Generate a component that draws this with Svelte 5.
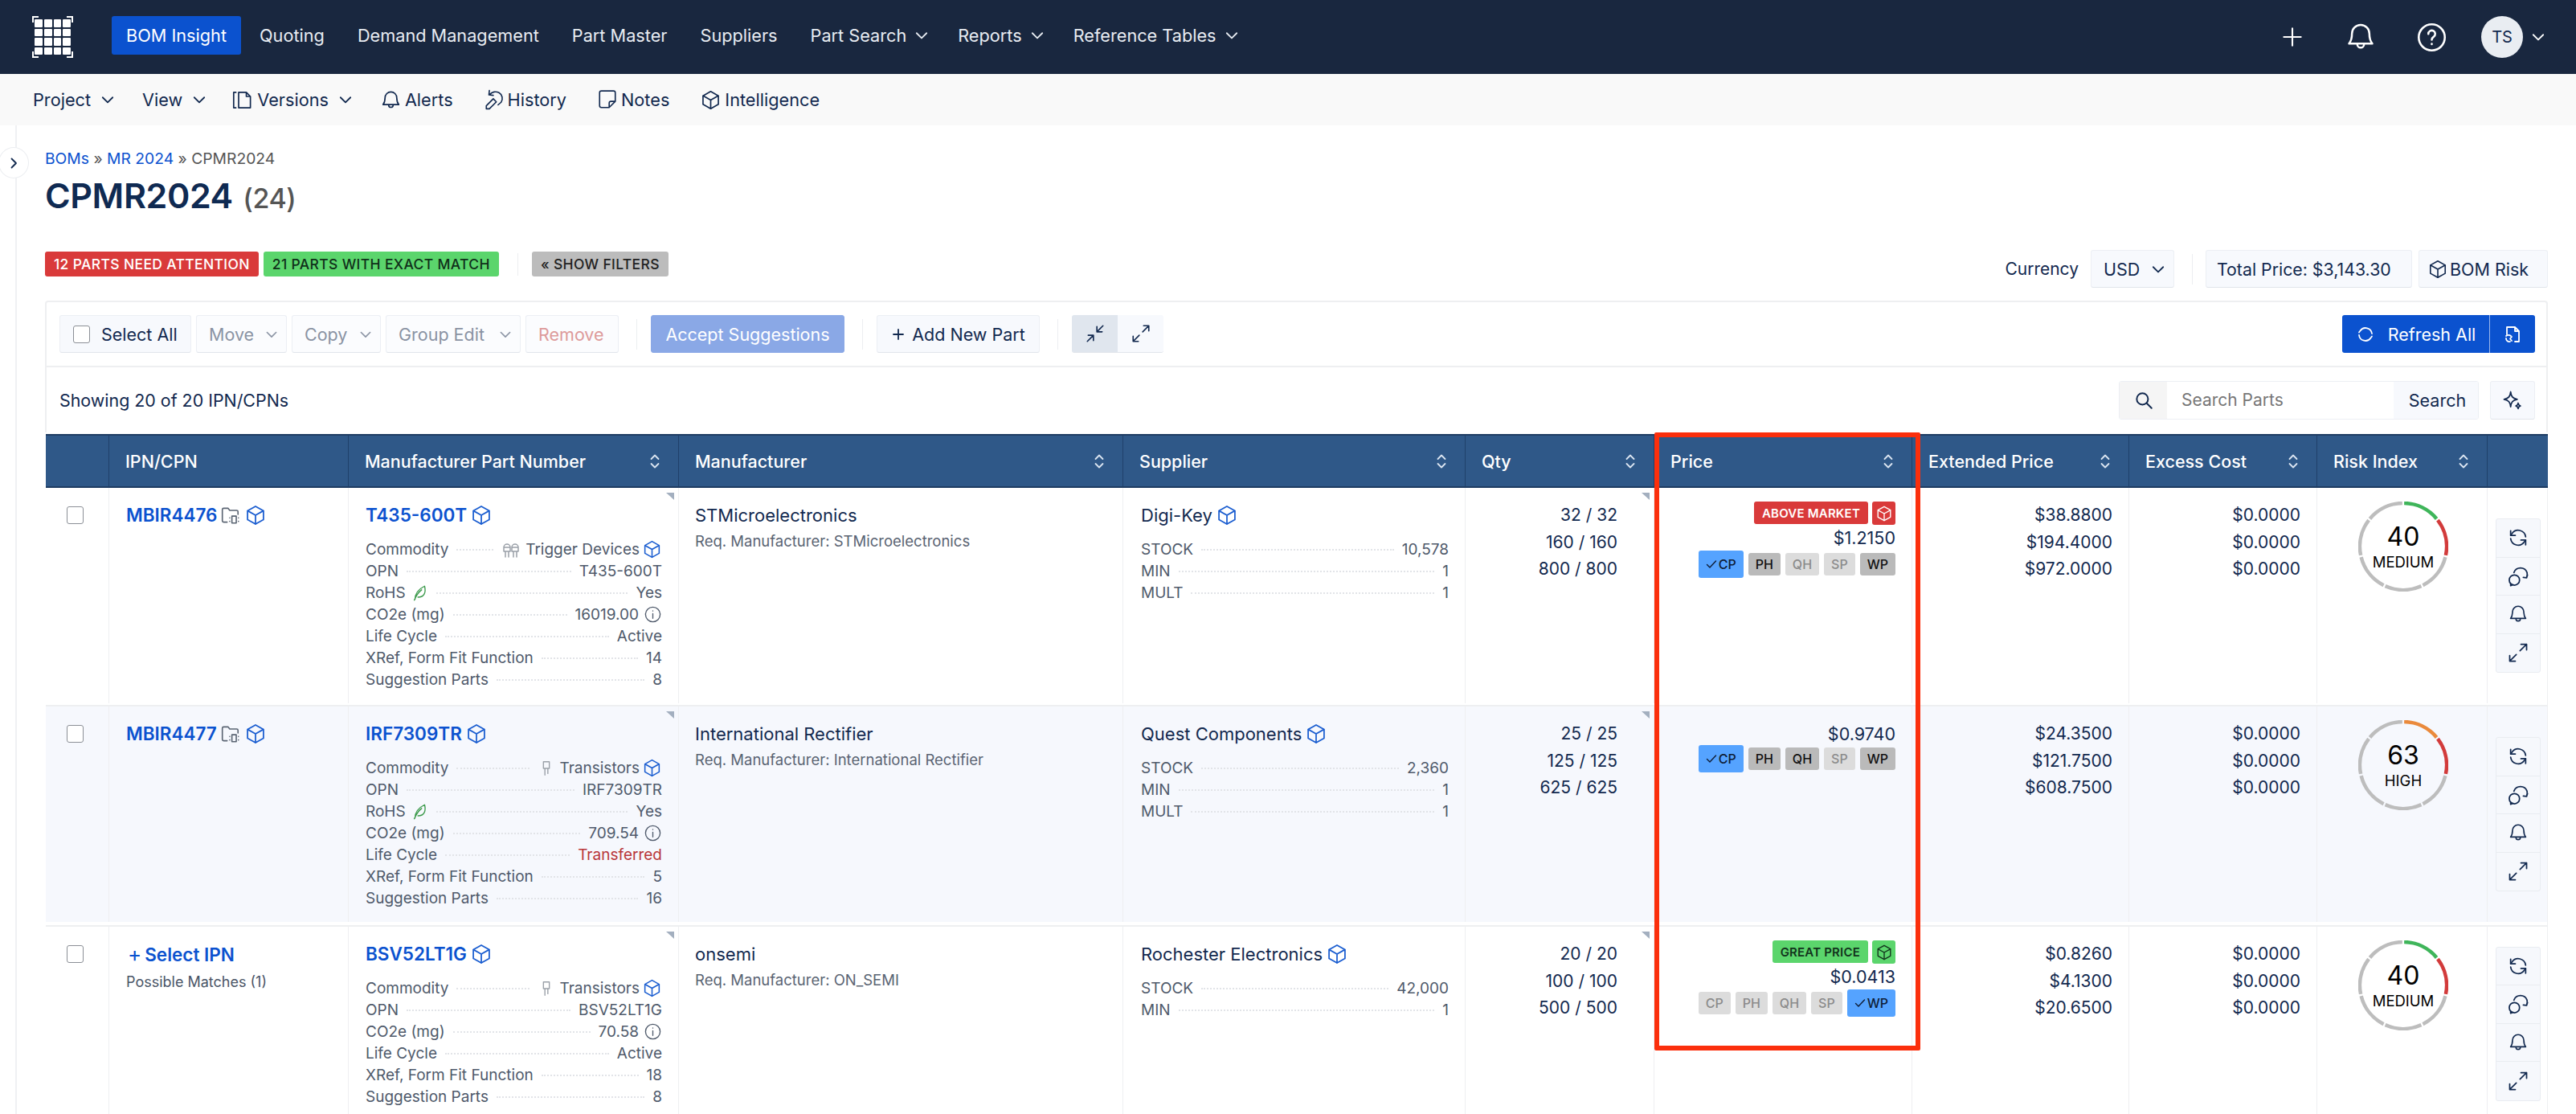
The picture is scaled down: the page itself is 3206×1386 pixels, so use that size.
<script>
	const nav = [
		{ label: 'BOM Insight', active: true },
		{ label: 'Quoting' },
		{ label: 'Demand Management' },
		{ label: 'Part Master' },
		{ label: 'Suppliers' },
		{ label: 'Part Search', caret: true },
		{ label: 'Reports', caret: true },
		{ label: 'Reference Tables', caret: true }
	];

	const columns = [
		{ label: '', sort: false },
		{ label: 'IPN/CPN', sort: false },
		{ label: 'Manufacturer Part Number', sort: true },
		{ label: 'Manufacturer', sort: true },
		{ label: 'Supplier', sort: true },
		{ label: 'Qty', sort: true },
		{ label: 'Price', sort: true },
		{ label: 'Extended Price', sort: true },
		{ label: 'Excess Cost', sort: true },
		{ label: 'Risk Index', sort: true },
		{ label: '', sort: false }
	];

	const rows = [
		{
			ipn: 'MBIR4476',
			mpn: 'T435-600T',
			commodity: 'Trigger Devices',
			chipIcon: 'trigger',
			opn: 'T435-600T',
			rohs: true,
			co2: '16019.00',
			life: 'Active',
			xref: 14,
			suggestions: 8,
			manufacturer: 'STMicroelectronics',
			req: 'STMicroelectronics',
			supplier: 'Digi-Key',
			stock: [['STOCK', '10,578'], ['MIN', '1'], ['MULT', '1']],
			qty: ['32 / 32', '160 / 160', '800 / 800'],
			badge: { text: 'ABOVE MARKET', tone: 'red' },
			price: '$1.2150',
			chips: [['CP', 'on'], ['PH', 'mid'], ['QH', 'off'], ['SP', 'off'], ['WP', 'mid']],
			extended: ['$38.8800', '$194.4000', '$972.0000'],
			risk: { score: 40, label: 'MEDIUM', lead: '#3fb55a' }
		},
		{
			ipn: 'MBIR4477',
			mpn: 'IRF7309TR',
			commodity: 'Transistors',
			chipIcon: 'transistor',
			opn: 'IRF7309TR',
			rohs: true,
			co2: '709.54',
			life: 'Transferred',
			xref: 5,
			suggestions: 16,
			manufacturer: 'International Rectifier',
			req: 'International Rectifier',
			supplier: 'Quest Components',
			stock: [['STOCK', '2,360'], ['MIN', '1'], ['MULT', '1']],
			qty: ['25 / 25', '125 / 125', '625 / 625'],
			price: '$0.9740',
			chips: [['CP', 'on'], ['PH', 'mid'], ['QH', 'mid'], ['SP', 'off'], ['WP', 'mid']],
			extended: ['$24.3500', '$121.7500', '$608.7500'],
			risk: { score: 63, label: 'HIGH', lead: '#ea8a3c' },
			alt: true
		},
		{
			select: true,
			mpn: 'BSV52LT1G',
			commodity: 'Transistors',
			chipIcon: 'transistor',
			opn: 'BSV52LT1G',
			rohs: false,
			co2: '70.58',
			life: 'Active',
			xref: 18,
			suggestions: 8,
			manufacturer: 'onsemi',
			req: 'ON_SEMI',
			supplier: 'Rochester Electronics',
			stock: [['STOCK', '42,000'], ['MIN', '1']],
			qty: ['20 / 20', '100 / 100', '500 / 500'],
			badge: { text: 'GREAT PRICE', tone: 'green' },
			price: '$0.0413',
			chips: [['CP', 'off'], ['PH', 'off'], ['QH', 'off'], ['SP', 'off'], ['WP', 'on']],
			extended: ['$0.8260', '$4.1300', '$20.6500'],
			risk: { score: 40, label: 'MEDIUM', lead: '#3fb55a' }
		}
	];

	const excess = ['$0.0000', '$0.0000', '$0.0000'];

	// seven equal ring segments, clockwise from 12 o'clock
	function segment(i) {
		const r = 54;
		const c = 56;
		const step = 360 / 7;
		const gap = 1.2;
		const point = (deg) => {
			const a = ((deg - 90) * Math.PI) / 180;
			return `${(c + r * Math.cos(a)).toFixed(2)} ${(c + r * Math.sin(a)).toFixed(2)}`;
		};
		return `M${point(i * step + gap)}A${r} ${r} 0 0 1 ${point((i + 1) * step - gap)}`;
	}

	function segColor(i, risk) {
		if (i === 0) return risk.lead;
		if (i === 1) return '#d23b3b';
		return '#bdbdbd';
	}
</script>

{#snippet cube(size = 28)}
	<svg class="ico thin" width={size} height={size} viewBox="0 0 24 24"><path d="M12 2.500l8.500 4.800v9.400L12 21.500l-8.500-4.800V7.300z" /><path d="M3.800 7.400L12 12l8.200-4.600M12 12v9.300" /></svg>
{/snippet}

{#snippet chevron(size = 22)}
	<svg class="ico chev" width={size} height={size} viewBox="0 0 16 16"><path d="M3.500 6l4.500 4.500L12.500 6" /></svg>
{/snippet}

{#snippet bell(size = 27)}
	<svg class="ico thin" width={size} height={size} viewBox="0 0 24 24"><path d="M12 3a6.500 6.500 0 0 0-6.500 6.500c0 3.500-.5 5.500-2.200 7.500h17.400c-1.700-2-2.200-4-2.200-7.500A6.500 6.500 0 0 0 12 3z" /><path d="M9.500 17.500a2.500 2.500 0 0 0 5 0" /></svg>
{/snippet}

{#snippet refresh()}
	<svg class="ico thin" width="28" height="28" viewBox="0 0 24 24"><path d="M20 11a8 8 0 0 0-14.500-3.500L4 9.500M4 13a8 8 0 0 0 14.500 3.500l1.500-2" /><path d="M4 4.500v5h5M20 19.500v-5h-5" /></svg>
{/snippet}

{#snippet expand(size = 28)}
	<svg class="ico thin" width={size} height={size} viewBox="0 0 24 24"><path d="M14 10l7-7M15 3h6v6M10 14l-7 7M3 15v6h6" /></svg>
{/snippet}

{#snippet sortIcon()}
	<svg class="sort" width="14" height="20" viewBox="0 0 14 20"><path d="M2.500 7L7 2.500 11.500 7M2.500 13L7 17.500 11.500 13" /></svg>
{/snippet}

<div class="app">
	<header class="topbar">
		<div class="logo">
			{#each Array(16) as _}<span></span>{/each}
		</div>
		<nav class="mainnav">
			{#each nav as item}
				<a class="navlink" class:active={item.active}>
					{item.label}
					{#if item.caret}{@render chevron()}{/if}
				</a>
			{/each}
		</nav>
		<div class="topright">
			<svg class="ico thin" width="34" height="34" viewBox="0 0 24 24"><path d="M12 4.500v15M4.500 12h15" /></svg>
			{@render bell(40)}
			<svg class="ico thin" width="41" height="41" viewBox="0 0 24 24"><circle cx="12" cy="12" r="9.500" /><path d="M9.500 9.500a2.500 2.500 0 1 1 3.800 2.100c-.9.600-1.300 1.100-1.300 2.100M12 16.700v.3" /></svg>
			<div class="user">
				<span class="avatar">TS</span>
				{@render chevron()}
			</div>
		</div>
	</header>

	<div class="subbar">
		<a class="sub caret">Project {@render chevron()}</a>
		<a class="sub caret">View {@render chevron()}</a>
		<a class="sub caret">
			<svg class="ico thin versions" width="27" height="27" viewBox="0 0 24 24"><path d="M5 3.500H2.500v17H5M8 3.500v17h13V8l-4.500-4.500zM16.500 3.500V8H21" /></svg>
			Versions {@render chevron()}
		</a>
		<a class="sub">{@render bell()} Alerts</a>
		<a class="sub">
			<svg class="ico thin" width="26" height="26" viewBox="0 0 24 24"><path d="M7 6a8.500 8.500 0 0 1 10.500-2c4 2.200 5 7.500 2.500 11l-3.500 3M6.500 1.500L6 6.500l5 .5" /><path d="M3 19l8-8 3.500 3.500-8 8H3z" /></svg>
			History
		</a>
		<a class="sub">
			<svg class="ico thin" width="26" height="26" viewBox="0 0 24 24"><path d="M14 21H5a2 2 0 0 1-2-2V4a2 2 0 0 1 2-2h14a2 2 0 0 1 2 2v10zM14 21v-5a2 2 0 0 1 2-2h5" /></svg>
			Notes
		</a>
		<a class="sub">{@render cube(27)} Intelligence</a>
	</div>

	<div class="layout">
		<aside class="rail">
			<button class="railtoggle" aria-label="Expand">
				<svg class="ico" width="14" height="16" viewBox="0 0 14 16"><path d="M4.500 2.500L10 8l-5.500 5.500" /></svg>
			</button>
		</aside>

		<main class="content">
			<div class="crumbs"><a>BOMs</a> » <a>MR 2024</a> » CPMR2024</div>
			<h1>CPMR2024 <small>(24)</small></h1>

			<div class="filters">
				<div class="pills">
					<span class="pill red">12 Parts Need Attention</span>
					<span class="pill green">21 Parts With Exact Match</span>
					<i class="vsep pillsep"></i>
					<span class="pill gray">« Show Filters</span>
				</div>
				<div class="summary">
					<span class="cur">Currency</span>
					<button class="btn usd">USD {@render chevron()}</button>
					<i class="vsep tall"></i>
					<button class="btn total">Total Price: $3,143.30</button>
					<button class="btn risk">{@render cube(26)} BOM Risk</button>
				</div>
			</div>

			<section class="card">
				<div class="toolbar">
					<button class="btn selectall"><span class="check"></span> Select All</button>
					<button class="btn muted w-move">Move {@render chevron(20)}</button>
					<button class="btn muted w-copy">Copy {@render chevron(20)}</button>
					<button class="btn muted w-group">Group Edit {@render chevron(20)}</button>
					<button class="btn muted remove">Remove</button>
					<i class="vsep tall"></i>
					<button class="btn accept">Accept Suggestions</button>
					<i class="vsep tall"></i>
					<button class="btn add">
						<svg class="ico" width="18" height="18" viewBox="0 0 18 18"><path d="M9 3v12M3 9h12" /></svg>
						Add New Part
					</button>
					<i class="vsep tall"></i>
					<div class="toggle">
						<button class="tg on" aria-label="Collapse">
							<svg class="ico thin" width="26" height="26" viewBox="0 0 24 24"><path d="M14 10l7-7M14 4v6h6M10 14l-7 7M4 14h6v6" /></svg>
						</button>
						<button class="tg" aria-label="Expand">{@render expand(26)}</button>
					</div>
					<div class="refresh">
						<button class="rf main">
							<svg class="ico" width="24" height="24" viewBox="0 0 24 24"><path d="M20 11a8 8 0 0 0-14.500-3.500L4 9.500M4 13a8 8 0 0 0 14.500 3.500l1.500-2" /></svg>
							Refresh All
						</button>
						<button class="rf side" aria-label="Refresh options">
							<svg class="ico" width="24" height="26" viewBox="0 0 24 24"><path d="M5 12V3h10l5 5v13h-5M15 3v5h5M11 15l-2 2.500 2 2.500" /><path d="M4 14a5 5 0 0 1 6 0M9 21a4 4 0 0 1-5-4" /></svg>
						</button>
					</div>
				</div>
				<div class="listbar">
					<span class="showing">Showing 20 of 20 IPN/CPNs</span>
					<div class="searchgroup">
						<div class="search">
							<span class="mag">
								<svg class="ico" width="26" height="26" viewBox="0 0 24 24"><circle cx="10.500" cy="10.500" r="6.500" /><path d="M15.500 15.500L21 21" /></svg>
							</span>
							<input placeholder="Search Parts" />
							<button class="go">Search</button>
						</div>
						<button class="btn spark" aria-label="AI search">
							<svg class="ico thin" width="28" height="28" viewBox="0 0 24 24"><path d="M10 3c.6 5 2 7 7 8-5 1-6.400 3-7 8-.6-5-2-7-7-8 5-1 6.400-3 7-8z" /><path d="M18 15c.2 1.800.8 2.500 2.500 3-1.700.500-2.300 1.200-2.500 3-.2-1.800-.8-2.500-2.500-3 1.700-.500 2.300-1.200 2.500-3z" /></svg>
						</button>
					</div>
				</div>
			</section>

			<div class="tablewrap">
				<div class="thead cols">
					{#each columns as col}
						<div class="th">
							<span>{col.label}</span>
							{#if col.sort}{@render sortIcon()}{/if}
						</div>
					{/each}
				</div>

				{#each rows as row}
					<div class="trow cols" class:alt={row.alt}>
						<div class="td c-check"><span class="check"></span></div>

						<div class="td c-ipn">
							{#if row.select}
								<a class="strong"><b class="plus">+</b>Select IPN</a>
								<div class="matches">Possible Matches (1)</div>
							{:else}
								<div class="titleline">
									<a class="strong">{row.ipn}</a>
									<svg class="ico thin grayico" width="26" height="26" viewBox="0 0 24 24"><path d="M8 20H4a1.500 1.500 0 0 1-1.500-1.500v-13A1.500 1.500 0 0 1 4 4h5l2 2.500h8a1.500 1.500 0 0 1 1.500 1.500v3" /><path d="M13.500 13h5v8h-5zM11 15v.1M11 19v.1M21 15v.1M21 19v.1" /></svg>
									<span class="blue">{@render cube()}</span>
								</div>
							{/if}
						</div>

						<div class="td c-mpn flag">
							<div class="titleline"><a class="strong">{row.mpn}</a><span class="blue">{@render cube()}</span></div>
							<div class="facts">
								<div class="fact">
									<span>Commodity</span><i></i>
									{#if row.chipIcon === 'trigger'}
										<svg class="ico thin pale" width="24" height="24" viewBox="0 0 24 24"><path d="M3 9a4 4 0 0 1 8 0v5H3zM13 9a4 4 0 0 1 8 0v5h-8zM5 14v7M9 14v7M15 14v7M19 14v7M3 9h8M13 9h8" /></svg>
									{:else}
										<svg class="ico thin pale" width="22" height="26" viewBox="0 0 24 24"><path d="M8 3h8v9H8zM10 12v9M14 12v7" /></svg>
									{/if}
									<span>{row.commodity}</span>
									<span class="blue tight">{@render cube(25)}</span>
								</div>
								<div class="fact"><span>OPN</span><i></i><span>{row.opn}</span></div>
								{#if row.rohs}
									<div class="fact">
										<span>RoHS</span>
										<svg class="ico leaf" width="22" height="25" viewBox="0 0 24 24"><path d="M6 21c0-8 5-14 13-18 2 8 0 15-9 15M5 22C8 15 11 11 15 8" /></svg>
										<i></i><span>Yes</span>
									</div>
								{/if}
								<div class="fact">
									<span>CO2e (mg)</span><i></i><span>{row.co2}</span>
									<svg class="ico infoi" width="23" height="23" viewBox="0 0 24 24"><circle cx="12" cy="12" r="9.500" /><path d="M12 11v6M12 7.200v.3" /></svg>
								</div>
								<div class="fact">
									<span>Life Cycle</span><i></i>
									<span class:bad={row.life === 'Transferred'}>{row.life}</span>
								</div>
								<div class="fact"><span>XRef, Form Fit Function</span><i></i><span>{row.xref}</span></div>
								<div class="fact"><span>Suggestion Parts</span><i></i><span>{row.suggestions}</span></div>
							</div>
						</div>

						<div class="td c-mfr">
							<div class="name">{row.manufacturer}</div>
							<div class="req">Req. Manufacturer: {row.req}</div>
						</div>

						<div class="td c-sup">
							<div class="titleline"><span class="name">{row.supplier}</span><span class="blue">{@render cube()}</span></div>
							<div class="facts">
								{#each row.stock as s}
									<div class="fact"><span>{s[0]}</span><i></i><span>{s[1]}</span></div>
								{/each}
							</div>
						</div>

						<div class="td c-qty flag">
							{#each row.qty as q}<div class="num">{q}</div>{/each}
						</div>

						<div class="td c-price">
							{#if row.badge}
								<div class="badges">
									<span class="badge {row.badge.tone}">{row.badge.text}</span>
									<span class="badge ic {row.badge.tone}">{@render cube(22)}</span>
								</div>
							{/if}
							<div class="price" class:nobadge={!row.badge}>{row.price}</div>
							<div class="chips">
								{#each row.chips as c}
									<span class="chip {c[1]}">
										{#if c[1] === 'on'}<svg class="ico tick" width="14" height="14" viewBox="0 0 14 14"><path d="M1.500 7.500l3.500 3.500 7.500-8" /></svg>{/if}{c[0]}
									</span>
								{/each}
							</div>
						</div>

						<div class="td c-ext">
							{#each row.extended as v}<div class="num">{v}</div>{/each}
						</div>

						<div class="td c-exc">
							{#each excess as v}<div class="num">{v}</div>{/each}
						</div>

						<div class="td c-risk">
							<div class="gauge">
								<svg width="112" height="112" viewBox="0 0 112 112">
									{#each Array(7) as _, i}
										<path d={segment(i)} fill="none" stroke={segColor(i, row.risk)} stroke-width="4.500" />
									{/each}
								</svg>
								<div class="score">{row.risk.score}</div>
								<div class="level">{row.risk.label}</div>
							</div>
						</div>

						<div class="td c-act">
							<div class="actions">
								<button aria-label="Refresh">{@render refresh()}</button>
								<button aria-label="Swap">
									<svg class="ico thin" width="28" height="28" viewBox="0 0 24 24"><path d="M8.500 9a7.500 7.500 0 0 1 14 0c.5 2 .3 3.500-.5 5.500M23 11.500l-1 3.200-3.500-.5" transform="translate(-1 -1)" /><circle cx="8" cy="16" r="5.500" /><path d="M4 20v2l2.500-1" /></svg>
								</button>
								<button aria-label="Alert">{@render bell(26)}</button>
								<button aria-label="Expand">{@render expand()}</button>
							</div>
						</div>
					</div>
				{/each}

				<div class="highlight"></div>
			</div>
		</main>
	</div>
</div>

<style>
	:global(body) {
		margin: 0;
		background: #fff;
		font-family: Inter, 'Liberation Sans', sans-serif;
		color: #12294f;
	}
	.app {
		height: 1386px;
		overflow: hidden;
		position: relative;
	}
	.ico {
		fill: none;
		stroke: currentColor;
		stroke-width: 1.800;
		stroke-linecap: round;
		stroke-linejoin: round;
		flex: none;
	}
	.ico.thin {
		stroke-width: 1.500;
	}
	.ico.chev {
		stroke-width: 1.300;
	}
	button {
		font-family: inherit;
		color: inherit;
	}

	/* top navigation */
	.topbar {
		height: 92px;
		background: #19273f;
		display: flex;
		align-items: center;
		padding: 0 36px 0 40px;
		box-sizing: border-box;
	}
	.logo {
		width: 51px;
		height: 52px;
		box-sizing: border-box;
		padding: 4px 3px;
		display: grid;
		grid-template-columns: repeat(4, 1fr);
		grid-auto-rows: 1fr;
		gap: 2px;
		margin-right: 48px;
		background:
			linear-gradient(#fff, #fff) 0 0 / 8px 2px no-repeat,
			linear-gradient(#fff, #fff) 0 0 / 2px 8px no-repeat,
			linear-gradient(#fff, #fff) 100% 0 / 8px 2px no-repeat,
			linear-gradient(#fff, #fff) 100% 0 / 2px 8px no-repeat,
			linear-gradient(#fff, #fff) 0 100% / 8px 2px no-repeat,
			linear-gradient(#fff, #fff) 0 100% / 2px 8px no-repeat,
			linear-gradient(#fff, #fff) 100% 100% / 8px 2px no-repeat,
			linear-gradient(#fff, #fff) 100% 100% / 2px 8px no-repeat;
	}
	.logo span {
		background: #fff;
		border-radius: 1px;
	}
	.mainnav {
		display: flex;
		align-items: center;
		gap: 5px;
		margin-bottom: 5px;
	}
	.navlink {
		display: flex;
		align-items: center;
		gap: 8px;
		height: 48px;
		padding: 0 18px;
		border-radius: 3px;
		font-size: 21.700px;
		color: #e8ecf2;
		white-space: nowrap;
	}
	.navlink .chev {
		margin: 0 -7px 0 0;
	}
	.navlink.active {
		background: #0b52cf;
		color: #fff;
	}
	.topright {
		margin-left: auto;
		display: flex;
		align-items: center;
		color: #fff;
		gap: 48px;
	}
	.user {
		display: flex;
		align-items: center;
		gap: 8px;
		margin-left: -7px;
	}
	.avatar {
		width: 52px;
		height: 52px;
		border-radius: 50%;
		background: #e9edf2;
		color: #12294f;
		display: flex;
		align-items: center;
		justify-content: center;
		font-size: 20px;
	}

	/* secondary navigation */
	.subbar {
		height: 64px;
		background: #f9f9f9;
		display: flex;
		align-items: center;
		padding-left: 41px;
		gap: 32px;
		box-sizing: border-box;
	}
	.sub {
		display: flex;
		align-items: center;
		gap: 4px;
		font-size: 21.700px;
		white-space: nowrap;
	}
	.sub:not(.caret) + .sub {
		margin-left: 6px;
	}
	.sub.caret {
		gap: 6px;
	}
	.sub .chev {
		margin-left: 4px;
	}
	.sub .versions {
		margin: 0 -1px 0 -3px;
	}

	.layout {
		display: flex;
	}
	.rail {
		width: 21px;
		flex: none;
		border-right: 2px solid #f0f1f3;
		box-sizing: border-box;
		height: 1230px;
		position: relative;
	}
	.railtoggle {
		position: absolute;
		left: -2px;
		top: 27px;
		width: 38px;
		height: 39px;
		border-radius: 50%;
		border: 1px solid #eceef1;
		background: #fff;
		padding: 0;
		display: flex;
		align-items: center;
		justify-content: center;
	}
	.content {
		flex: 1;
		min-width: 0;
		padding: 0 35px 0 35px;
	}

	.crumbs {
		margin-top: 29px;
		font-size: 19.300px;
		line-height: 24px;
		color: #555;
	}
	.crumbs a {
		color: #0b52cf;
	}
	h1 {
		margin: 9px 0 0;
		font-size: 43px;
		line-height: 50px;
		font-weight: 600;
		color: #0f2a52;
		letter-spacing: -0.4px;
	}
	h1 small {
		font-size: 34px;
		font-weight: 500;
		color: #555;
		margin-left: 2px;
	}

	.filters {
		margin-top: 39px;
		display: flex;
		justify-content: space-between;
		align-items: flex-start;
	}
	.pills {
		display: flex;
		align-items: center;
		gap: 6px;
		margin-top: 2px;
	}
	.pill {
		height: 31px;
		display: flex;
		align-items: center;
		padding: 0 11px;
		border-radius: 3px;
		font-size: 17.500px;
		font-weight: 500;
		text-transform: uppercase;
		letter-spacing: 0.35px;
		white-space: nowrap;
	}
	.pill.red {
		background: #d93a3a;
		color: #fff;
	}
	.pill.green {
		background: #5bd56c;
		color: #10301a;
	}
	.pill.gray {
		background: #bcbcbc;
		color: #222;
	}
	.vsep {
		display: block;
		width: 1px;
		height: 38px;
		background: #eceef1;
		margin: 0 16px;
	}
	.vsep.pillsep {
		height: 28px;
		margin: 0 11px 0 17px;
	}
	.summary {
		display: flex;
		align-items: center;
	}
	.summary .vsep {
		margin: 0 16px 0 22px;
	}
	.cur {
		font-size: 21px;
		margin-right: 15px;
	}
	.btn {
		height: 47px;
		box-sizing: border-box;
		display: flex;
		align-items: center;
		gap: 8px;
		padding: 0 15px;
		background: #f7f9fd;
		border: 1px solid #eceff4;
		border-bottom-color: #e1e5eb;
		border-radius: 3px;
		font-size: 21.500px;
		white-space: nowrap;
	}
	.btn .chev {
		margin-right: -7px;
	}
	.usd {
		width: 104px;
		justify-content: space-between;
	}
	.total {
		width: 257px;
		margin-right: 8px;
		padding: 0 13px;
		font-size: 21.300px;
	}
	.risk {
		width: 161px;
		gap: 2px;
		padding: 0 10px;
	}

	.card {
		margin-top: 16px;
		border: 2px solid #eeeff1;
		border-bottom: none;
		border-radius: 4px 4px 0 0;
		box-sizing: border-box;
	}
	.toolbar {
		height: 81px;
		box-sizing: border-box;
		border-bottom: 2px solid #eeeff1;
		display: flex;
		align-items: center;
		padding: 0 14px 0 16px;
		gap: 6px;
	}
	.toolbar .vsep {
		margin: 0 11px 0 16px;
	}
	.selectall {
		width: 164px;
		gap: 14px;
		padding: 0 16px;
	}
	.check {
		display: block;
		width: 21px;
		height: 22px;
		box-sizing: border-box;
		background: #fff;
		border: 1.500px solid #8b8f96;
		border-radius: 3px;
		flex: none;
	}
	.muted {
		color: #8a93a3;
		background: #fbfcfe;
		justify-content: space-between;
	}
	.w-move {
		width: 113px;
	}
	.w-copy {
		width: 111px;
	}
	.w-group {
		width: 168px;
	}
	.remove {
		width: 116px;
		color: #dd9a9a;
	}
	.accept {
		width: 241px;
		justify-content: center;
		background: #8aa8e6;
		border-color: #8aa8e6;
		color: #fff;
	}
	.add {
		width: 203px;
		justify-content: center;
	}
	.toggle {
		display: flex;
		height: 47px;
		border-radius: 3px;
		overflow: hidden;
		background: #f7f9fd;
		border-bottom: 1px solid #e1e5eb;
		box-sizing: border-box;
	}
	.tg {
		width: 57px;
		border: none;
		background: transparent;
		display: flex;
		align-items: center;
		justify-content: center;
		padding: 0;
	}
	.tg.on {
		background: #e0e6ee;
	}
	.refresh {
		margin-left: auto;
		display: flex;
		height: 47px;
	}
	.rf {
		border: none;
		background: #0b52cf;
		color: #fff;
		font-size: 21.500px;
		display: flex;
		align-items: center;
		justify-content: center;
		height: 47px;
		padding: 0;
	}
	.rf.main {
		width: 184px;
		gap: 16px;
		border-radius: 3px 0 0 3px;
		border-right: 1px solid #9cb8ec;
	}
	.rf.side {
		width: 56px;
		border-radius: 0 3px 3px 0;
	}
	.listbar {
		height: 81px;
		display: flex;
		align-items: center;
		justify-content: space-between;
		padding: 0 14px 0 16px;
	}
	.showing {
		font-size: 21.400px;
	}
	.searchgroup {
		display: flex;
		gap: 14px;
	}
	.search {
		display: flex;
		height: 48px;
		box-sizing: border-box;
		border: 1px solid #eceff4;
		border-radius: 3px;
		overflow: hidden;
	}
	.mag {
		width: 59px;
		background: #f5f5f5;
		display: flex;
		align-items: center;
		justify-content: center;
	}
	.search input {
		width: 282px;
		box-sizing: border-box;
		border: none;
		padding: 0 16px 0 18px;
		font: 21px Inter, sans-serif;
		outline: none;
	}
	.search input::placeholder {
		color: #777;
	}
	.go {
		width: 105px;
		background: #f7f9fd;
		border: none;
		font-size: 21.500px;
		padding: 0 0 0 4px;
	}
	.spark {
		width: 56px;
		height: 48px;
		padding: 0;
		justify-content: center;
	}

	/* table */
	.tablewrap {
		position: relative;
		margin: 2px 0 0 1px;
	}
	.cols {
		display: grid;
		grid-template-columns: 79px 298px 411px 553px 426px 235px 321px 270px 234px 212px 75px;
	}
	.thead {
		background: #2f5888;
		border-top: 2px solid #1e3c62;
		border-bottom: 2px solid #1e3c62;
		height: 67px;
		box-sizing: border-box;
		color: #fff;
	}
	.th {
		display: flex;
		align-items: center;
		justify-content: space-between;
		padding: 0 22px 0 20px;
		border-right: 1px solid #1f406a;
		font-size: 21.500px;
		font-weight: 500;
	}
	.th:last-child {
		border-right: none;
	}
	.sort {
		fill: none;
		stroke: #dce6f2;
		stroke-width: 1.800;
		stroke-linecap: round;
		stroke-linejoin: round;
	}
	.trow {
		border-bottom: 2px solid #eeeff1;
		padding-bottom: 2px;
		box-sizing: border-box;
		font-size: 19px;
		border-right: 1px solid #eeeff1;
	}
	.trow.alt {
		background: #f6f8fd;
		padding-bottom: 4px;
		box-shadow: inset 0 -4px 0 #fff;
	}
	.td {
		border-right: 1px solid #eeeff1;
		padding: 20px 18px 0;
		box-sizing: border-box;
		position: relative;
		min-height: 222px;
	}
	.td:last-child {
		border-right: none;
	}
	.c-check {
		padding: 23px 0 0 26px;
	}
	.c-ipn {
		padding-left: 21px;
	}
	.titleline {
		display: flex;
		align-items: center;
		gap: 4px;
		height: 28px;
	}
	.strong {
		font-size: 22.500px;
		line-height: 28px;
		font-weight: 600;
		color: #0b52cf;
	}
	.plus {
		font-weight: 400;
		font-size: 26px;
		margin: 0 4px 0 2px;
	}
	.matches {
		margin-top: 7px;
		font-size: 18px;
		color: #4a5567;
		line-height: 26px;
	}
	.blue {
		color: #1a5dd0;
		display: inline-flex;
	}
	.blue.tight {
		margin-left: -3px;
	}
	.grayico {
		color: #5a6472;
	}
	.c-mpn {
		padding: 20px 20px 16px 21px;
	}
	.facts {
		margin-top: 15px;
		color: #4f5a6b;
	}
	.fact {
		display: flex;
		align-items: center;
		height: 27px;
		gap: 6px;
		white-space: nowrap;
	}
	.fact i {
		flex: 1;
		height: 0;
		border-top: 2px dotted #e2e4e8;
		margin: 0 4px;
	}
	.pale {
		color: #9aa0a8;
	}
	.leaf {
		color: #3c9a4c;
		stroke-width: 1.500;
	}
	.infoi {
		color: #4f5a6b;
		stroke-width: 1.400;
	}
	.bad {
		color: #b9373a;
	}
	.flag::after {
		content: '';
		position: absolute;
		top: 6px;
		right: 5px;
		width: 10px;
		height: 9px;
		background: #a3afbf;
		clip-path: polygon(0 0, 100% 0, 100% 100%);
	}
	.c-mfr {
		padding-left: 20px;
	}
	.name {
		font-size: 22px;
		line-height: 28px;
		color: #12294f;
	}
	.req {
		margin-top: 5px;
		line-height: 26px;
		font-size: 18.500px;
		color: #5a6473;
	}
	.c-sup {
		padding: 20px 20px 0 22px;
	}
	.num {
		text-align: right;
		font-size: 21px;
		line-height: 33.500px;
	}
	.c-qty,
	.c-ext,
	.c-exc {
		padding-top: 17px;
		padding-right: 20px;
	}
	.c-qty {
		padding-right: 45px;
	}
	.c-price {
		padding: 17px 20px 0 18px;
		display: flex;
		flex-direction: column;
		align-items: flex-end;
	}
	.badges {
		display: flex;
		gap: 5px;
		height: 29px;
	}
	.badge {
		height: 28px;
		display: flex;
		align-items: center;
		padding: 0 10px;
		border-radius: 3px;
		font-size: 15px;
		font-weight: 600;
		letter-spacing: 0.2px;
	}
	.badge.ic {
		width: 29px;
		height: 29px;
		padding: 0;
		justify-content: center;
		box-sizing: border-box;
	}
	.badge.red {
		background: #d93a3a;
		color: #fff;
	}
	.badge.green {
		background: #5bd56c;
		color: #12331c;
	}
	.price {
		font-size: 21.500px;
		line-height: 32px;
	}
	.price.nobadge {
		line-height: 34px;
		margin-bottom: -3px;
	}
	.chips {
		display: flex;
		align-items: center;
		gap: 6px;
		height: 34px;
	}
	.chip {
		height: 28px;
		box-sizing: border-box;
		padding: 0 9px;
		display: flex;
		align-items: center;
		border-radius: 3px;
		font-size: 16px;
		font-weight: 500;
		color: #555;
	}
	.chip.mid {
		background: #bababa;
		color: #111;
	}
	.chip.off {
		background: #dcdcdc;
		color: #8b8b8b;
	}
	.chip.on {
		height: 34px;
		background: #55a3ff;
		color: #0e1d36;
	}
	.tick {
		margin-right: 2px;
		stroke-width: 1.400;
	}
	.c-risk {
		padding: 17px 0 0 51px;
	}
	.gauge {
		position: relative;
		width: 112px;
		height: 112px;
		color: #000;
		text-align: center;
	}
	.gauge svg {
		position: absolute;
		left: 0;
		top: 0;
	}
	.score {
		padding-top: 24px;
		font-size: 32px;
		line-height: 40px;
	}
	.level {
		font-size: 18.500px;
		line-height: 22px;
	}
	.c-act {
		padding: 0 0 0 10px;
		display: flex;
		align-items: center;
	}
	.actions {
		width: 56px;
		border: 1px solid #e9ecf1;
		border-radius: 3px;
		background: #f6f8fc;
		box-sizing: border-box;
	}
	.actions button {
		display: flex;
		align-items: center;
		justify-content: center;
		width: 100%;
		height: 47.500px;
		border: none;
		border-bottom: 1px solid #e9ecf1;
		background: transparent;
		padding: 0;
	}
	.actions button:last-child {
		border-bottom: none;
	}

	.highlight {
		position: absolute;
		left: 2002px;
		top: -2px;
		width: 331px;
		height: 769px;
		border: 6px solid #fb2f0c;
		border-radius: 2px;
		box-sizing: border-box;
		pointer-events: none;
	}
</style>
